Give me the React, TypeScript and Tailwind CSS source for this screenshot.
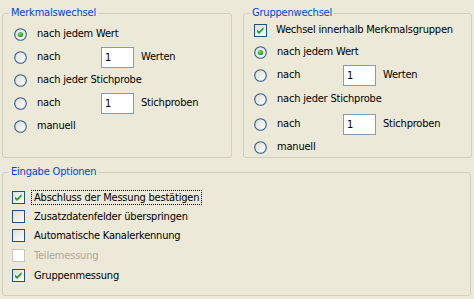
import type { ReactNode } from 'react';

const font = "font-['Tahoma','DejaVu_Sans_Condensed','Liberation_Sans',sans-serif]";

function Radio({ checked = false }: { checked?: boolean }) {
  return (
    <svg width="13" height="13" viewBox="0 0 13 13" className="shrink-0">
      <defs>
        <linearGradient id="rg" x1="0" y1="0" x2="1" y2="1">
          <stop offset="0" stopColor="#DCDCD7" />
          <stop offset="1" stopColor="#FFFFFF" />
        </linearGradient>
        <radialGradient id="dot" cx="0.4" cy="0.4" r="0.6">
          <stop offset="0" stopColor="#6FE36F" />
          <stop offset="1" stopColor="#1E9A1E" />
        </radialGradient>
      </defs>
      <circle cx="6.5" cy="6.5" r="5.8" fill="url(#rg)" stroke="#2F5C8C" strokeWidth="1.1" />
      {checked && <circle cx="6.5" cy="6.5" r="2.6" fill="url(#dot)" />}
    </svg>
  );
}

function Check({ checked = false, disabled = false }: { checked?: boolean; disabled?: boolean }) {
  return (
    <svg width="13" height="13" viewBox="0 0 13 13" className="shrink-0">
      <defs>
        <linearGradient id="cg" x1="0" y1="0" x2="1" y2="1">
          <stop offset="0" stopColor="#DCDCD7" />
          <stop offset="1" stopColor="#FFFFFF" />
        </linearGradient>
      </defs>
      <rect
        x="0.5"
        y="0.5"
        width="12"
        height="12"
        fill={disabled ? '#FFFFFF' : 'url(#cg)'}
        stroke={disabled ? '#CAC8BB' : '#1C5180'}
      />
      {checked && <path d="M3 5.5 L5 7.5 L9.5 3 L9.5 5.5 L5 10 L3 8 Z" fill="#21A121" />}
    </svg>
  );
}

function NumBox() {
  return (
    <div className="w-[33px] h-[21px] border border-[#7F9DB9] bg-white pl-[3px] text-[11px] leading-[19px] text-black">
      1
    </div>
  );
}

// group box: legend sits on the border, content padding lives on the inner div
function Group({ title, className, inner, children }: {
  title: string;
  className: string;
  inner: string;
  children: ReactNode;
}) {
  return (
    <fieldset className={`border border-[#D0D0BF] rounded-[3px] ${className}`}>
      <legend className="ml-[6px] px-[2px] text-[11px] leading-[12px] text-[#0046D5]">{title}</legend>
      <div className={inner}>{children}</div>
    </fieldset>
  );
}

function RadioRow({ label, checked, h }: { label: string; checked?: boolean; h: string }) {
  return (
    <div className={`flex items-center ${h}`}>
      <Radio checked={checked} />
      <span className="ml-[10px]">{label}</span>
    </div>
  );
}

function CountRow({ unit, h, labelW }: { unit: string; h: string; labelW: string }) {
  return (
    <div className={`flex items-center ${h}`}>
      <Radio />
      <span className={`ml-[10px] ${labelW}`}>nach</span>
      <NumBox />
      <span className="ml-[7px]">{unit}</span>
    </div>
  );
}

function OptionRow({ label, checked, disabled, focused, h }: {
  label: string;
  checked?: boolean;
  disabled?: boolean;
  focused?: boolean;
  h: string;
}) {
  return (
    <div className={`flex items-center ${h}`}>
      <Check checked={checked} disabled={disabled} />
      <span
        className={`ml-[6px] px-[2px] leading-[13px] border ${
          focused ? 'border-dotted border-black' : 'border-transparent'
        } ${disabled ? 'text-[#ACA899]' : 'text-black'}`}
      >
        {label}
      </span>
    </div>
  );
}

export default function App() {
  return (
    <div className={`w-[474px] h-[299px] bg-[#ECE9D8] pt-[7px] px-[2px] text-[11px] tracking-[-0.2px] text-black ${font}`}>
      <div className="flex gap-[11px]">
        <Group title="Merkmalswechsel" className="w-[230px] h-[151px]" inner="pl-[11px] pt-[4px]">
          <RadioRow label="nach jedem Wert" checked h="h-[23px]" />
          <CountRow unit="Werten" h="h-[23px]" labelW="w-[64px]" />
          <RadioRow label="nach jeder Stichprobe" h="h-[23px]" />
          <CountRow unit="Stichproben" h="h-[23px]" labelW="w-[64px]" />
          <RadioRow label="manuell" h="h-[23px]" />
        </Group>

        <Group title="Gruppenwechsel" className="w-[229px] h-[151px]" inner="pl-[10px] pt-[1px]">
          <div className="flex items-center h-[21px]">
            <Check checked />
            <span className="ml-[9px]">Wechsel innerhalb Merkmalsgruppen</span>
          </div>
          <RadioRow label="nach jedem Wert" checked h="h-[22px]" />
          <CountRow unit="Werten" h="h-[24px]" labelW="w-[66px]" />
          <RadioRow label="nach jeder Stichprobe" h="h-[25px]" />
          <CountRow unit="Stichproben" h="h-[24px]" labelW="w-[66px]" />
          <RadioRow label="manuell" h="h-[22px]" />
        </Group>
      </div>

      <Group title="Eingabe Optionen" className="mt-[8px] w-[469px] h-[130px]" inner="pl-[9px] pt-[9px]">
        <OptionRow label="Abschluss der Messung bestätigen" checked focused h="h-[20px]" />
        <OptionRow label="Zusatzdatenfelder überspringen" h="h-[19px]" />
        <OptionRow label="Automatische Kanalerkennung" h="h-[19px]" />
        <OptionRow label="Teilemessung" disabled h="h-[20px]" />
        <OptionRow label="Gruppenmessung" checked h="h-[20px]" />
      </Group>
    </div>
  );
}
